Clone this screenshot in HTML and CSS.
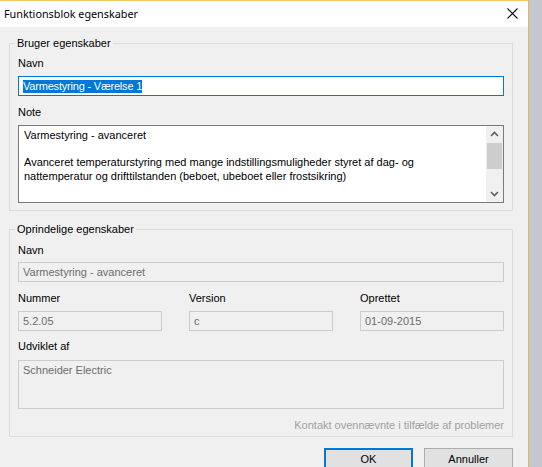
FILE: index.html
```html
<!DOCTYPE html>
<html lang="da">
<head>
<meta charset="utf-8">
<title>Funktionsblok egenskaber</title>
<link rel="stylesheet" href="styles.css">
</head>
<body>
<div class="window">
  <div class="titlebar">
    <span class="title">Funktionsblok egenskaber</span>
    <svg class="close" width="11" height="11" viewBox="0 0 11 11"><path d="M0.5 0.5 L10.5 10.5 M10.5 0.5 L0.5 10.5" stroke="#000" stroke-width="1.1" fill="none"/></svg>
  </div>
  <div class="content">
    <fieldset class="group group-user">
      <legend>Bruger egenskaber</legend>
      <div class="label first">Navn</div>
      <div class="input active"><span class="sel">Varmestyring - Værelse 1</span></div>
      <div class="label">Note</div>
      <div class="note">
        <div class="note-text">
          <div>Varmestyring - avanceret</div>
          <div>&nbsp;</div>
          <div>Avanceret temperaturstyring med mange indstillingsmuligheder styret af dag- og nattemperatur og drifttilstanden (beboet, ubeboet eller frostsikring)</div>
        </div>
        <div class="scrollbar">
          <svg class="arrow" width="17" height="17" viewBox="0 0 17 17"><path d="M5 10 L8.5 6.5 L12 10" stroke="#606060" stroke-width="1.6" fill="none"/></svg>
          <div class="track"><div class="thumb"></div></div>
          <svg class="arrow" width="17" height="17" viewBox="0 0 17 17"><path d="M5 7 L8.5 10.5 L12 7" stroke="#606060" stroke-width="1.6" fill="none"/></svg>
        </div>
      </div>
    </fieldset>

    <fieldset class="group group-orig">
      <legend>Oprindelige egenskaber</legend>
      <div class="label first">Navn</div>
      <div class="input disabled">Varmestyring - avanceret</div>
      <div class="row3">
        <div class="col">
          <div class="label">Nummer</div>
          <div class="input disabled">5.2.05</div>
        </div>
        <div class="col">
          <div class="label">Version</div>
          <div class="input disabled">c</div>
        </div>
        <div class="col">
          <div class="label">Oprettet</div>
          <div class="input disabled">01-09-2015</div>
        </div>
      </div>
      <div class="label udv">Udviklet af</div>
      <div class="input disabled multi">Schneider Electric</div>
      <div class="hint">Kontakt ovennævnte i tilfælde af problemer</div>
    </fieldset>

    <div class="buttons">
      <div class="btn default">OK</div>
      <div class="btn">Annuller</div>
    </div>
  </div>
</div>
</body>
</html>
```

FILE: styles.css
```css
html, body {
  margin: 0;
  padding: 0;
}
body {
  width: 542px;
  height: 467px;
  overflow: hidden;
  background: linear-gradient(to right, #adb1b9 0px, #bfc3ca 3px, #c4c7ce 100%);
  font-family: "Liberation Sans", Arial, sans-serif;
  font-size: 11px;
  color: #000;
}
.window {
  width: 528px;
  height: 466px;
  border-top: 1px solid #f1c766;
  border-right: 1px solid #eab847;
  background: #f0f0f0;
  overflow: hidden;
}
.titlebar {
  height: 26px;
  background: #ffffff;
  display: flex;
  align-items: center;
  justify-content: space-between;
  padding: 0 10px 0 4px;
}
.title {
  font-family: "Noto Sans", "Open Sans", sans-serif;
  font-size: 10.8px;
  color: #000;
  position: relative;
  top: -1px;
}
.close {
  display: block;
  position: relative;
  top: -1px;
}
.content {
  padding-left: 9px;
  width: 504px;
}
.group {
  margin: 0;
  border: 1px solid #dcdcdc;
  padding: 7px 8px 7px 8px;
  min-width: 0;
}
.group-user {
  margin-top: 10px;
}
.group legend {
  padding: 0 2px;
  margin-left: -3px;
  line-height: 13px;
  font-size: 11px;
}
.group-orig {
  margin-top: 12px;
  padding-top: 8px;
  padding-bottom: 4px;
}
.label {
  line-height: 13px;
  height: 13px;
  margin-top: 10px;
}
.label.first {
  margin-top: 0;
}
.group-user .input {
  margin-top: 6px;
}
.input {
  box-sizing: border-box;
  height: 20px;
  line-height: 18px;
  padding-left: 4px;
  margin-top: 5px;
  white-space: nowrap;
  overflow: hidden;
}
.input.active {
  border: 1px solid #0078d7;
  background: #fff;
}
.sel {
  background: #0078d7;
  color: #fff;
  display: inline-block;
  line-height: 13px;
  letter-spacing: -0.2px;
}
.input.disabled {
  border: 1px solid #cccccc;
  background: #f0f0f0;
  color: #6d6d6d;
}
.group-user .label + .note {
  margin-top: 6px;
}
.note {
  box-sizing: border-box;
  height: 78px;
  border: 1px solid #7a7a7a;
  background: #fff;
  display: flex;
}
.note-text {
  flex: 1;
  padding: 3px 5px 0 5px;
  line-height: 13.5px;
}
.scrollbar {
  width: 17px;
  background: #f0f0f0;
  display: flex;
  flex-direction: column;
}
.scrollbar .arrow {
  display: block;
  flex: none;
}
.track {
  flex: 1;
}
.thumb {
  height: 26px;
  margin: 0 1px;
  background: #cdcdcd;
}
.row3 {
  display: grid;
  grid-template-columns: 1fr 1fr 1fr;
  column-gap: 27px;
}
.row3 .input {
  margin-top: 6px;
}
.label.udv {
  margin-top: 9px;
}
.input.multi {
  height: 49px;
  margin-top: 7px;
  line-height: 13px;
  padding-top: 3px;
}
.hint {
  text-align: right;
  color: #a0a0a0;
  line-height: 13px;
  margin-top: 10px;
}
.buttons {
  display: flex;
  justify-content: flex-end;
  gap: 11px;
  margin-top: 11px;
}
.btn {
  box-sizing: border-box;
  width: 89px;
  height: 23px;
  border: 1px solid #adadad;
  background: #e1e1e1;
  text-align: center;
  line-height: 21px;
}
.btn.default {
  border: 2px solid #0078d7;
  line-height: 19px;
}
```
